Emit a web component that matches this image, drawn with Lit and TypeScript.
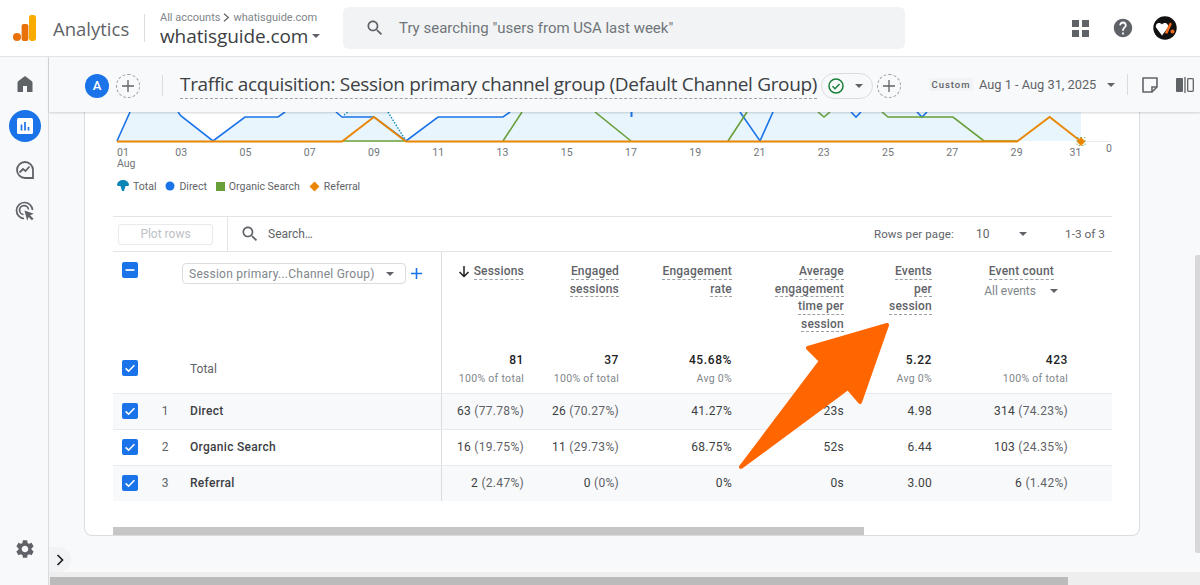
import { LitElement, html, css, svg } from "lit";
import { customElement } from "lit/decorators.js";

const SEARCH = "M15.5 14h-.79l-.28-.27C15.41 12.59 16 11.11 16 9.5 16 5.91 13.09 3 9.5 3S3 5.91 3 9.5 5.91 16 9.5 16c1.61 0 3.09-.59 4.23-1.57l.27.28v.79l5 4.99L20.49 19l-4.99-5zm-6 0C7.01 14 5 11.99 5 9.5S7.01 5 9.5 5 14 7.01 14 9.5 11.99 14 9.5 14z";
const GEAR = "M19.14 12.94c.04-.3.06-.61.06-.94 0-.32-.02-.64-.07-.94l2.03-1.58c.18-.14.23-.41.12-.61l-1.92-3.32c-.12-.22-.37-.29-.59-.22l-2.39.96c-.5-.38-1.03-.7-1.62-.94l-.36-2.54c-.04-.24-.24-.41-.48-.41h-3.84c-.24 0-.43.17-.47.41l-.36 2.54c-.59.24-1.13.57-1.62.94l-2.39-.96c-.22-.08-.47 0-.59.22L2.74 8.87c-.12.21-.08.47.12.61l2.03 1.58c-.05.3-.09.63-.09.94s.02.64.07.94l-2.03 1.58c-.18.14-.23.41-.12.61l1.92 3.32c.12.22.37.29.59.22l2.39-.96c.5.38 1.03.7 1.62.94l.36 2.54c.05.24.24.41.48.41h3.84c.24 0 .44-.17.47-.41l.36-2.54c.59-.24 1.13-.56 1.62-.94l2.39.96c.22.08.47 0 .59-.22l1.92-3.32c.12-.22.07-.47-.12-.61l-2.01-1.58zM12 15.6c-1.98 0-3.6-1.62-3.6-3.6s1.62-3.6 3.6-3.6 3.6 1.62 3.6 3.6-1.62 3.6-3.6 3.6z";
const HELP = "M12 2C6.48 2 2 6.48 2 12s4.48 10 10 10 10-4.48 10-10S17.52 2 12 2zm1 17h-2v-2h2v2zm2.07-7.75l-.9.92C13.45 12.9 13 13.5 13 15h-2v-.5c0-1.1.45-2.1 1.17-2.83l1.24-1.26c.37-.36.59-.86.59-1.41 0-1.1-.9-2-2-2s-2 .9-2 2H8c0-2.21 1.79-4 4-4s4 1.79 4 4c0 .88-.36 1.68-.93 2.25z";

const X = (d: number) => 117 + 32.13 * (d - 1);
const pts = (a: number[][]) => a.map((p) => p.join(",")).join(" ");

const ticks = ["01", "03", "05", "07", "09", "11", "13", "15", "17", "19", "21", "23", "25", "27", "29", "31"];

const rows = [
  { n: 1, name: "Direct", v: [["63", " (77.78%)"], ["26", " (70.27%)"], ["41.27%", ""], ["23s", ""], ["4.98", ""], ["314", " (74.23%)"]] },
  { n: 2, name: "Organic Search", v: [["16", " (19.75%)"], ["11", " (29.73%)"], ["68.75%", ""], ["52s", ""], ["6.44", ""], ["103", " (24.35%)"]] },
  { n: 3, name: "Referral", v: [["2", " (2.47%)"], ["0", " (0%)"], ["0%", ""], ["0s", ""], ["3.00", ""], ["6", " (1.42%)"]] },
];
const totals = [["81", "100% of total"], ["37", "100% of total"], ["45.68%", "Avg 0%"], ["", ""], ["5.22", "Avg 0%"], ["423", "100% of total"]];
const headers = [["Sessions"], ["Engaged", "sessions"], ["Engagement", "rate"], ["Average", "engagement", "time per", "session"], ["Events", "per", "session"], ["Event count"]];

@customElement("app-root")
export class AppRoot extends LitElement {
  static styles = css`
    :host { display: block; width: 1200px; height: 585px; overflow: hidden; position: relative; font-family: Roboto, sans-serif; color: #5f6368; background: #f8f9fa; }
    * { box-sizing: border-box; }
    svg { display: block; flex: none; }
    .top { height: 57px; background: #fff; border-bottom: 1px solid #e3e4e6; display: flex; align-items: center; position: relative; z-index: 3; }
    .logo { margin-left: 13px; }
    .brand { font: 400 18.5px "Open Sans", sans-serif; margin-left: 17px; width: 91px; color: #5f6368; }
    .vr { width: 1px; height: 28px; background: #dadce0; }
    .acct { margin-left: 15px; width: 183px; display: flex; flex-direction: column; }
    .crumb { font-size: 11px; line-height: 14px; color: #80868b; display: flex; align-items: center; gap: 3px; margin-top: 1px; white-space: nowrap; }
    .prop { font: 400 19px "Open Sans", sans-serif; line-height: 22px; color: #3c4043; display: flex; align-items: center; gap: 4px; white-space: nowrap; letter-spacing: -.1px; }
    .caret { width: 0; height: 0; border-left: 4px solid transparent; border-right: 4px solid transparent; border-top: 4px solid #5f6368; flex: none; }
    .search { width: 562px; height: 42px; background: #f1f3f4; border-radius: 6px; display: flex; align-items: center; padding-left: 22px; font-size: 15px; line-height: 40px; color: #70757a; gap: 14px; white-space: nowrap; }
    .apps { margin-left: 167px; }
    .help { margin-left: 23px; }
    .avatar { margin-left: 19px; }

    .body { display: flex; height: 528px; }
    .side { width: 49px; border-right: 1px solid #dadce0; background: #f8f9fa; display: flex; flex-direction: column; align-items: center; padding: 15px 0 25px 1px; flex: none; }
    .side .push { flex: 1; }
    .nav-on { width: 32px; height: 32px; border-radius: 50%; background: #1a73e8; display: flex; align-items: center; justify-content: center; margin-top: 14px; }
    .explore { margin-top: 16px; }
    .ads { margin-top: 17px; }
    .main { flex: 1; min-width: 0; display: flex; flex-direction: column; }

    .sub { height: 55px; display: flex; align-items: center; padding: 2px 0 0 36px; background: #f8f9fa; box-shadow: 0 1px 2px rgba(60,64,67,.22); position: relative; z-index: 2; }
    .badge { width: 24px; height: 24px; border-radius: 50%; background: #1a73e8; color: #fff; font: 500 13px Roboto, sans-serif; display: flex; align-items: center; justify-content: center; }
    .add { width: 24px; height: 24px; border-radius: 50%; border: 1px dashed #9aa0a6; display: flex; align-items: center; justify-content: center; flex: none; }
    .add.first { margin-left: 7px; }
    .sub .vr { height: 21px; margin-left: 22px; }
    .title { margin-left: 17px; width: 637px; flex: none; font: 400 19px "Open Sans", sans-serif; letter-spacing: -.32px; color: #3c4043; white-space: nowrap; border-bottom: 1.5px dashed #9aa0a6; line-height: 23px; padding-bottom: 2px; }
    .chip { margin-left: 4px; width: 52px; height: 26px; border: 1px solid #dadce0; border-radius: 13px; display: flex; align-items: center; padding-left: 5px; gap: 10px; flex: none; }
    .add.second { margin-left: 4px; }
    .custom { margin: 0 0 2px 28px; font-size: 9.5px; font-weight: 500; letter-spacing: 1px; background: #f1f3f4; height: 13px; line-height: 13px; width: 44px; text-align: center; color: #5f6368; }
    .date { margin: 0 0 2px 6px; font-size: 12.8px; width: 128px; white-space: nowrap; color: #5f6368; }
    .sub .caret { margin-bottom: 1px; }
    .sub .chip .caret { margin-bottom: 0; }
    .sub .vr.r { margin: 0 0 2px 12px; height: 21px; }
    .note { margin: 0 0 2px 13px; }
    .cmp { margin: 0 0 2px 17px; }

    .card { margin-left: 35px; width: 1056px; height: 424px; background: #fff; border: 1px solid #dadce0; border-top: 0; border-radius: 0 0 8px 8px; }
    .legend { margin: 7px 0 0 32px; height: 14px; display: flex; align-items: center; font-size: 10.5px; color: #5f6368; }
    .legend span { margin: 0 9px 0 4px; }
    .tbl { margin: 23px 0 0 28px; width: 999px; font-size: 12px; }
    .tools { height: 36px; border-top: 1px solid #e3e4e6; border-bottom: 1px solid #e3e4e6; display: flex; align-items: center; }
    .plot { margin-left: 5px; width: 95px; height: 21px; border: 1px solid #e8eaed; border-radius: 3px; color: #bdc1c6; font-size: 12px; display: flex; align-items: center; justify-content: center; }
    .tools .div { margin-left: 14px; width: 1px; height: 34px; background: #e3e4e6; }
    .tools .sicon { margin-left: 12px; }
    .ph { margin-left: 8px; width: 606px; font-size: 12px; color: #5f6368; }
    .rpp { font-size: 11.5px; width: 102px; letter-spacing: .1px; }
    .ten { width: 43px; font-size: 12px; }
    .pg { margin-left: 38px; font-size: 11.8px; color: #5f6368; white-space: nowrap; }

    .row { display: grid; grid-template-columns: 329px 90px 95px 113px 112px 88px 136px 1fr; }
    .row > .m { padding-right: 8px; text-align: right; }
    .dim { border-right: 1px solid #dadce0; display: flex; align-items: center; padding-left: 9px; }
    .rank { width: 52px; padding-left: 2px; text-align: center; color: #5f6368; }
    .cb { width: 16px; height: 16px; border-radius: 2px; background: #1a73e8; display: flex; align-items: center; justify-content: center; flex: none; }

    .hd { height: 94px; }
    .hd .dim { align-items: flex-start; padding-top: 10px; }
    .drop { margin-left: 44px; margin-top: 1px; width: 224px; height: 21px; border: 1px solid #dadce0; border-radius: 4px; display: flex; align-items: center; padding: 0 11px 0 6px; justify-content: space-between; color: #80868b; font-size: 12px; letter-spacing: .25px; white-space: nowrap; }
    .plus { margin: 5px 0 0 4px; }
    .hd .m { display: flex; flex-direction: column; align-items: flex-end; padding-top: 12px; }
    .ln { font-weight: 500; color: #5f6368; line-height: 14.5px; border-bottom: 1px dashed #9aa0a6; white-space: nowrap; font-size: 12px; letter-spacing: .2px; display: block; height: 15.5px; }
    .ln + .ln { margin-top: 2px; }
    .lnwrap { display: flex; align-items: center; gap: 4px; }
    .arrow { margin-left: -4px; }
    .row > .m.ev { padding-right: 22px; }
    .allev { display: flex; align-items: center; gap: 14px; font-size: 12px; color: #80868b; margin-top: 4px; margin-right: -4px; }

    .tot { height: 48px; border-bottom: 1px solid #e8eaed; }
    .tot .dim { padding-bottom: 3px; }
    .tot .lbl { color: #5f6368; margin-left: 52px; padding-top: 2px; }
    .tot .m { padding-top: 7px; }
    .tv { font-weight: 500; color: #202124; line-height: 14px; font-size: 12px; letter-spacing: .6px; height: 14px; }
    .ts { font-size: 10.5px; color: #80868b; line-height: 14px; margin-top: 5px; letter-spacing: .3px; }

    .dr { height: 36px; border-bottom: 1px solid #e8eaed; align-items: stretch; }
    .dr.alt { background: #f8f9fa; }
    .dr.last { border-bottom: 0; height: 35px; }
    .dr .dim { padding-bottom: 1px; }
    .dr .m { display: flex; align-items: center; justify-content: flex-end; color: #3c4043; white-space: pre; letter-spacing: .3px; padding-bottom: 1px; }
    .dr .m i { font-style: normal; color: #5f6368; }
    .name { font-weight: 500; color: #3c4043; letter-spacing: .3px; }

    .hbar { margin: 26px 0 0 28px; width: 751px; height: 8px; background: #c6c6c6; }
    .spacer { height: 36px; flex: none; }
    .track { height: 13px; background: #eee; padding: 5px 0 0 1px; flex: none; }
    .thumb { width: 1018px; height: 8px; background: #bbb; }

    .tab { position: absolute; left: 49px; top: 547px; width: 22px; height: 25px; background: #f1f3f4; border-radius: 0 13px 13px 0; display: flex; align-items: center; justify-content: center; z-index: 2; }
    .vbar { position: absolute; left: 1195px; top: 255px; width: 5px; height: 298px; background: #d8d8db; border-radius: 2px 0 0 2px; z-index: 4; }
    .annot { position: absolute; left: 0; top: 0; z-index: 5; pointer-events: none; }
    text { font-family: Roboto, sans-serif; }
  `;

  private chart() {
    const c = "#1a73e8", g = "#689f38", o = "#ea8600";
    const area = [[117,141],[130,112],[178,112],[181,117],[213,141],[245,117],[278,117],[285,112],[336,112],[342,117],[348,112],[388,112],[406,141],[438,117],[503,117],[510,112],[1081,112],[1081,141]];
    const blue = [
      [[117,141],[130,112]],
      [[178,112],[181,116],[213,141],[245,117],[278,117],[285,112]],
      [[336,112],[342,117],[374,117],[406,141],[438,117],[503,117],[510,112]],
      [[740,112],[760,141],[773,112]],
      [[851,112],[856,117],[861,112]],
      [[917,112],[922,117],[927,112]],
    ];
    const green = [
      [[342,141],[406,141]],
      [[503,141],[522,112]],
      [[595,112],[631,141]],
      [[728,141],[747,112]],
      [[818,112],[824,117],[830,112]],
      [[882,112],[888,117],[953,117],[984,141],[1017,141]],
    ];
    return html`<svg width="1054" height="60" viewBox="85 112 1054 60">
      <polygon points=${pts(area)} fill="#e8f5fd"></polygon>
      <line x1="1081" y1="141.5" x2="1111" y2="141.5" stroke="#e8eaed"></line>
      <polyline points="388,112 406,141" fill="none" stroke="#1a8fc4" stroke-width="1.5" stroke-dasharray="1.5 1.5"></polyline>
      <polyline points="344,115 348,112" fill="none" stroke="#1a8fc4" stroke-width="1.5" stroke-dasharray="1.5 1.5"></polyline>
      <line x1="631.5" y1="112" x2="631.5" y2="117" stroke="${c}" stroke-width="2"></line>
      ${blue.map((l) => svg`<polyline points=${pts(l)} fill="none" stroke=${c} stroke-width="1.6"></polyline>`)}
      ${green.map((l) => svg`<polyline points=${pts(l)} fill="none" stroke=${g} stroke-width="1.6"></polyline>`)}
      <polyline points=${pts([[117,141.5],[342,141.5],[374,117],[406,141.5],[1017,141.5],[1049.6,117],[1081,141.5]])} fill="none" stroke=${o} stroke-width="1.8"></polyline>
      <path d="M1081 137l4.2 4.500-4.2 4.500-4.200-4.500z" fill=${o}></path>
      <rect x="1077" y="137.5" width="8" height="8" fill="none" stroke=${g} stroke-width=".8" stroke-dasharray="1.5 2"></rect>
      ${ticks.map((t, i) => svg`<text x=${i === 15 ? 1075.5 : X(i * 2 + 1)} y="156" font-size="10.5" fill="#70757a" text-anchor=${i === 0 ? "start" : "middle"} letter-spacing=".2">${t}</text>`)}
      <text x="117" y="166.500" font-size="10.5" fill="#70757a">Aug</text>
      <text x="1109" y="152" font-size="10.5" fill="#70757a" text-anchor="middle">0</text>
    </svg>`;
  }

  private check() {
    return html`<div class="cb"><svg width="12" height="12" viewBox="0 0 12 12"><path d="M1.6 6.4l3 2.8 5.8-6" fill="none" stroke="#fff" stroke-width="1.6"></path></svg></div>`;
  }

  private plusIcon(color = "#5f6368", sz = 14, w = 1.3) {
    return html`<svg width=${sz} height=${sz} viewBox="0 0 14 14"><path d="M7 1v12M1 7h12" stroke=${color} stroke-width=${w} fill="none"></path></svg>`;
  }

  render() {
    return html`
      <div class="top">
        <svg class="logo" width="23" height="26" viewBox="0 0 23 26">
          <circle cx="4" cy="22" r="4" fill="#e8710a"></circle>
          <rect x="8.6" y="9" width="6.8" height="17" rx="2" fill="#e8710a"></rect>
          <rect x="16" y="0" width="7" height="26" rx="2.4" fill="#f9ab00"></rect>
        </svg>
        <div class="brand">Analytics</div>
        <div class="vr"></div>
        <div class="acct">
          <div class="crumb">All accounts
            <svg width="7" height="9" viewBox="0 0 7 9"><path d="M1 .8l4.4 3.7L1 8.2" fill="none" stroke="#5f6368" stroke-width="1.2"></path></svg>
            whatisguide.com</div>
          <div class="prop">whatisguide.com<span class="caret"></span></div>
        </div>
        <div class="search">
          <svg width="20" height="20" viewBox="0 0 24 24" fill="#5f6368"><path d=${SEARCH}></path></svg>
          Try searching "users from USA last week"
        </div>
        <svg class="apps" width="17" height="17" viewBox="0 0 17 17" fill="#5f6368">
          <rect width="7" height="7"></rect><rect x="10" width="7" height="7"></rect><rect y="10" width="7" height="7"></rect><rect x="10" y="10" width="7" height="7"></rect>
        </svg>
        <svg class="help" width="22" height="22" viewBox="0 0 24 24" fill="#5f6368"><path d=${HELP}></path></svg>
        <svg class="avatar" width="24" height="24" viewBox="0 0 24 24">
          <circle cx="12" cy="12" r="11.7" fill="#111"></circle>
          <path d="M9 19.500L3 11.500C1.800 7.500 6.800 5.200 9 8.500 11.200 5.200 16.200 7.500 15 11.500z" fill="#fff"></path>
          <path d="M11.800 17l5-10.500 2.200 1.200-4.600 10zM19.500 13.500a2 2 0 1 0 .01 0z" fill="#f26a1b"></path>
        </svg>
      </div>

      <div class="body">
        <div class="side">
          <svg width="24" height="24" viewBox="0 0 24 24" fill="#5f6368"><path d="M4.5 20V10.5C4.5 9.8 4.9 9.3 5.4 8.9L12 4l6.6 4.900c.5.400.9.900.9 1.600V20h-5.500v-6h-4v6z"></path></svg>
          <div class="nav-on">
            <svg width="18" height="18" viewBox="0 0 18 18"><rect x="1" y="1" width="16" height="16" rx="1.5" fill="#fff"></rect><path d="M5.500 7.500v6M9 5v8.500M12.500 10v3.500" stroke="#1a73e8" stroke-width="1.700" fill="none"></path></svg>
          </div>
          <svg class="explore" width="24" height="24" viewBox="0 0 24 24" fill="none" stroke="#5f6368" stroke-width="1.800"><path d="M20 12a8 8 0 1 0-8 8h8z"></path><path d="M6.500 14.500l3.500-3.500 2.500 2 4-4.500"></path></svg>
          <svg class="ads" width="24" height="24" viewBox="0 0 24 24" fill="none" stroke="#5f6368" stroke-width="1.700"><path d="M19.500 11a8 8 0 1 0-8.500 8.500"></path><path d="M15.500 10.500a4.500 4.500 0 1 0-5 5"></path><path d="M11.500 11.500l9.300 3.300-3.700 1.500 3.400 3.400-1.600 1.600-3.400-3.400-1.300 3.800z" fill="#5f6368" stroke="none"></path></svg>
          <div class="push"></div>
          <svg width="22" height="22" viewBox="0 0 24 24" fill="#5f6368"><path d=${GEAR}></path></svg>
        </div>

        <div class="main">
          <div class="sub">
            <div class="badge">A</div>
            <div class="add first">${this.plusIcon()}</div>
            <div class="vr"></div>
            <div class="title">Traffic acquisition: Session primary channel group (Default Channel Group)</div>
            <div class="chip">
              <svg width="18" height="18" viewBox="0 0 18 18" fill="none"><circle cx="9" cy="9" r="7" stroke="#188038" stroke-width="1.500"></circle><path d="M5.500 9.200l2.500 2.500 4.500-4.800" stroke="#188038" stroke-width="1.500"></path></svg>
              <span class="caret"></span>
            </div>
            <div class="add second">${this.plusIcon()}</div>
            <div class="custom">Custom</div>
            <div class="date">Aug 1 - Aug 31, 2025</div>
            <span class="caret"></span>
            <div class="vr r"></div>
            <svg class="note" width="18" height="18" viewBox="0 0 18 18" fill="none" stroke="#5f6368" stroke-width="1.600"><path d="M2 2h14v9l-5 5H2z" stroke-linejoin="round"></path><path d="M11 16v-5h5"></path></svg>
            <svg class="cmp" width="18" height="18" viewBox="0 0 18 18"><rect x="0" y="2" width="7" height="14" rx="1" fill="#5f6368"></rect><path d="M9 1v16" stroke="#5f6368" stroke-width="1.300"></path><rect x="11.700" y="2.700" width="5.600" height="12.600" rx=".8" fill="none" stroke="#5f6368" stroke-width="1.300"></rect></svg>
          </div>

          <div class="card">
            ${this.chart()}
            <div class="legend">
              <svg width="12" height="12" viewBox="0 0 12 12"><path d="M0 5a6 5 0 0 1 12 0c0 .8-1 1-2 1H8.500L7 11H5L3.500 6H2C1 6 0 5.800 0 5z" fill="#0b85b5"></path></svg><span>Total</span>
              <svg width="10" height="10" viewBox="0 0 10 10"><circle cx="5" cy="5" r="4.500" fill="#1a73e8"></circle></svg><span>Direct</span>
              <svg width="9" height="9" viewBox="0 0 9 9"><rect width="9" height="9" fill="#689f38"></rect></svg><span>Organic Search</span>
              <svg width="11" height="11" viewBox="0 0 11 11"><path d="M5.500 .5l5 5-5 5-5-5z" fill="#ea8600"></path></svg><span>Referral</span>
            </div>

            <div class="tbl">
              <div class="tools">
                <div class="plot">Plot rows</div>
                <div class="div"></div>
                <svg class="sicon" width="20" height="20" viewBox="0 0 24 24" fill="#5f6368"><path d=${SEARCH}></path></svg>
                <div class="ph">Search…</div>
                <div class="rpp">Rows per page:</div>
                <div class="ten">10</div>
                <span class="caret"></span>
                <div class="pg">1-3 of 3</div>
              </div>

              <div class="row hd">
                <div class="dim">
                  <div class="cb"><svg width="12" height="12" viewBox="0 0 12 12"><path d="M1.500 6h9" stroke="#fff" stroke-width="1.700"></path></svg></div>
                  <div class="drop">Session primary...Channel Group)<span class="caret"></span></div>
                  <div class="plus">${this.plusIcon("#1a73e8", 13, 1.7)}</div>
                </div>
                ${headers.map((h, i) => html`<div class="m ${i === 5 ? "ev" : ""}">
                  ${i === 0 ? html`<div class="lnwrap">
                      <svg class="arrow" width="12" height="13" viewBox="0 0 12 13"><path d="M6 1v10.500M1.500 7L6 11.500 10.500 7" fill="none" stroke="#202124" stroke-width="1.500"></path></svg>
                      <span class="ln">${h[0]}</span></div>`
                    : h.map((t) => html`<span class="ln">${t}</span>`)}
                  ${i === 5 ? html`<div class="allev">All events <span class="caret"></span></div>` : ""}
                </div>`)}
                <div></div>
              </div>

              <div class="row tot">
                <div class="dim">${this.check()}<span class="lbl">Total</span></div>
                ${totals.map((t) => html`<div class="m"><div class="tv">${t[0]}</div><div class="ts">${t[1]}</div></div>`)}
                <div></div>
              </div>

              ${rows.map((r, i) => html`<div class="row dr ${i % 2 === 0 ? "alt" : ""} ${i === 2 ? "last" : ""}">
                <div class="dim">${this.check()}<span class="rank">${r.n}</span><span class="name">${r.name}</span></div>
                ${r.v.map((v) => html`<div class="m">${v[0]}<i>${v[1]}</i></div>`)}
                <div></div>
              </div>`)}
            </div>
            <div class="hbar"></div>
          </div>
          <div class="spacer"></div>
          <div class="track"><div class="thumb"></div></div>
        </div>
      </div>

      <div class="tab"><svg width="10" height="12" viewBox="0 0 10 12"><path d="M2.500 1l5 5-5 5" fill="none" stroke="#202124" stroke-width="1.700"></path></svg></div>
      <div class="vbar"></div>
      <svg class="annot" width="1200" height="585" viewBox="0 0 1200 585">
        <path d="M887 325L808 348 821 361 741 467 848 388 860 402z" fill="#ff6600" stroke="#ff6600" stroke-width="4" stroke-linejoin="round"></path>
      </svg>
    `;
  }
}
